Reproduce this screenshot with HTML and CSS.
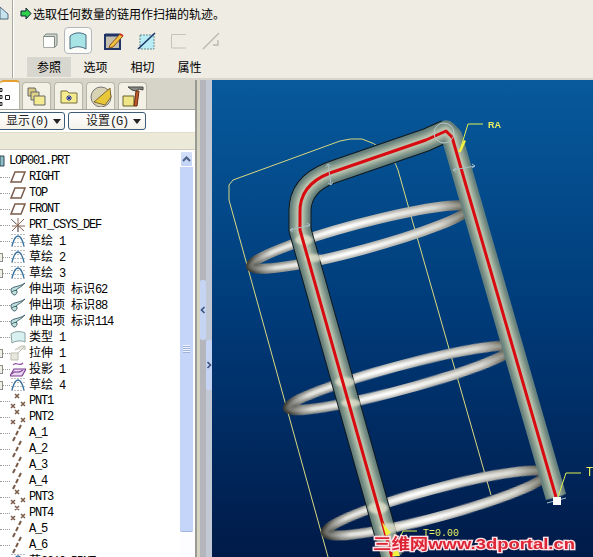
FILE: index.html
```html
<!DOCTYPE html>
<html lang="en">
<head>
    <meta charset="UTF-8">
    <title>Pro/E sweep</title>
    <link rel="stylesheet" href="styles.css">
</head>
<body>
<svg class="defs" width="0" height="0">
    <defs>
        <symbol id="i-plane" viewBox="0 0 16 16"><path d="M5 3H15L11 13H1Z" fill="#fff" stroke="#7b5b49" stroke-width="1.5"/></symbol>
        <symbol id="i-csys" viewBox="0 0 16 16"><path d="M1 2L14 14M14 2L2 14M8 1V15M2 9H15" fill="none" stroke="#8a6450" stroke-width="1"/><path d="M1 2L6 7M8 9V15" stroke="#777" stroke-width="1"/></symbol>
        <symbol id="i-sketch" viewBox="0 0 16 16"><path d="M2 13C4 5 6 3 8 3S12 5 14 13" fill="none" stroke="#2f6f9f" stroke-width="1.3"/><path d="M2 1V15M5 1V15M8 1V15M11 1V15M14 1V15" stroke="#778" stroke-width="1" stroke-dasharray="1 3"/></symbol>
        <symbol id="i-extrude" viewBox="0 0 16 16"><path d="M1 8C4 5 9 6 15 2C11 6 7 8 6 9C8 10 7 13 5 14C2 14 1 11 1 8Z" fill="#bfe0dc" stroke="#40606a" stroke-width="1"/><path d="M2 11C4 9 6 9 7 10" fill="none" stroke="#40606a" stroke-width="1"/></symbol>
        <symbol id="i-quilt" viewBox="0 0 16 16"><path d="M1 5C5 2 11 2 15 4V13C11 11 5 12 2 14Z" fill="#d8f0f0" stroke="#8aa0a0" stroke-width="1"/></symbol>
        <symbol id="i-stretch" viewBox="0 0 16 16"><path d="M1 8H8V15H1ZM8 8L14 2M5 5L11 1H15V5" fill="#e8e8e0" stroke="#bdbdb0" stroke-width="1"/></symbol>
        <symbol id="i-project" viewBox="0 0 16 16"><path d="M4 8H16L12 15H0Z" fill="#e8d8f0" stroke="#7a3a90" stroke-width="1.2"/><path d="M2 13C5 8 7 14 13 9M3 4C6 0 9 6 13 2" fill="none" stroke="#8a4aa0" stroke-width="1.1"/></symbol>
        <symbol id="i-points" viewBox="0 0 16 20"><path d="M5 3L9 7M9 3L5 7M11 11L15 15M15 11L11 15M1 13L5 17M5 13L1 17" stroke="#7b5b49" stroke-width="1.5"/></symbol>
        <symbol id="i-axis" viewBox="0 0 16 18"><path d="M11 1L9 5M8 7L6 11M5 13L3 17" stroke="#7b5b49" stroke-width="2"/></symbol>

        <linearGradient id="ringShade">
            <stop offset="0" stop-color="#3c3c36"/>
            <stop offset=".06" stop-color="#8a8a84"/>
            <stop offset=".4" stop-color="#c2c2be"/>
            <stop offset=".88" stop-color="#a8a69e"/>
            <stop offset="1" stop-color="#4a4a40"/>
        </linearGradient>
        <linearGradient id="ringLight">
            <stop offset="0" stop-color="#6c6c66"/>
            <stop offset=".1" stop-color="#e4e4e0"/>
            <stop offset=".45" stop-color="#ffffff"/>
            <stop offset=".85" stop-color="#dcdcd6"/>
            <stop offset="1" stop-color="#77776c"/>
        </linearGradient>
        <linearGradient id="sky" x2="0" y2="1">
            <stop offset="0" stop-color="#075a9c"/>
            <stop offset=".5" stop-color="#003a78"/>
            <stop offset="1" stop-color="#001a48"/>
        </linearGradient>
        <filter id="crisp"><feGaussianBlur stdDeviation=".4"/></filter>
        <filter id="soft" x="-10%" y="-10%" width="120%" height="120%"><feGaussianBlur stdDeviation="1.300"/></filter>
    </defs>
</svg>

<div class="app">
    <div class="dash">
        <div class="dash-stub">
            <svg width="9" height="20" viewBox="0 0 9 20"><path d="M0 7L8 14V19H0Z" fill="#c6e4ee" stroke="#50687a"/></svg>
        </div>
        <div class="dash-main">
            <div class="prompt">
                <svg width="12" height="13" viewBox="0 0 12 13"><path d="M1 4H6V1L11 6.5L6 12V9H1Z" fill="#2fd04a" stroke="#123" stroke-width="1"/></svg>
                <span>选取任何数量的链用作扫描的轨迹。</span>
            </div>
            <div class="tools">
                <span class="tool"><svg width="16" height="15" viewBox="0 0 16 15"><path d="M1.500 3.500H12.500V14.500H1.500Z" fill="#fff" stroke="#a4aaa4"/><path d="M1.500 3.500L4 1H15V12L12.500 14.500V3.500Z" fill="#d0d4cc" stroke="#7c8a84"/></svg></span>
                <span class="tool is-on"><svg width="18" height="18" viewBox="0 0 18 18"><path d="M1 4C6 0 12 0 17 3V17C12 14 6 14 1 17Z" fill="#a8e4e6" stroke="#4a6a80"/></svg></span>
                <span class="tool"><svg width="20" height="18" viewBox="0 0 20 18"><path d="M1 3H16V17H1Z" fill="#c4bfae" stroke="#203468" stroke-width="2"/><path d="M1 3H16" stroke="#203468" stroke-width="3"/><path d="M6 13L16 2L19 4L9 15L5 16Z" fill="#f0c040" stroke="#8a5020"/><path d="M16 2L19 4" stroke="#d03020" stroke-width="2"/></svg></span>
                <span class="tool"><svg width="19" height="18" viewBox="0 0 19 18"><path d="M3 3H17V17H3Z" fill="#b8ecf4" stroke="#6a8a90" stroke-dasharray="2 1"/><path d="M1 17L18 1" stroke="#1c3468" stroke-width="1.6"/></svg></span>
                <span class="tool"><svg width="16" height="16" viewBox="0 0 16 16"><path d="M.5 1.500H15M.5 1.500V15H15" fill="none" stroke="#c4c4bc"/></svg></span>
                <span class="tool"><svg width="18" height="18" viewBox="0 0 18 18"><path d="M1 17L17 1M11 13H16V8" fill="none" stroke="#b8b8b0" stroke-width="1.300"/></svg></span>
            </div>
            <div class="dash-tabs">
                <span class="dash-tab is-on">参照</span>
                <span class="dash-tab">选项</span>
                <span class="dash-tab">相切</span>
                <span class="dash-tab">属性</span>
            </div>
        </div>
    </div>

    <div class="work">
        <div class="nav">
            <div class="nav-tabs">
                <div class="nav-tab first">
                    <svg width="10" height="24" viewBox="0 0 10 24"><path d="M0 4.500H2V7.500H0ZM0 11.500H2V14.500H0ZM5.500 11.500H9.500V15.500H5.500ZM0 18.500H2V21.500H0Z" fill="#fff" stroke="#222"/></svg>
                </div>
                <div class="nav-tab">
                    <svg width="20" height="20" viewBox="0 0 20 20"><path d="M1 2H8L9 4V10H1Z" fill="#d8c880" stroke="#666"/><path d="M4 6H12V14H4Z" fill="#e0d488" stroke="#666"/><path d="M7 10H18V19H7Z" fill="#f4ea90" stroke="#666"/></svg>
                </div>
                <div class="nav-tab">
                    <svg width="18" height="16" viewBox="0 0 18 16"><path d="M1 3H7L9 5H17V15H1Z" fill="#f4ec8c" stroke="#7a7040"/><path d="M9 7V13M6 10H12M7 8L11 12M11 8L7 12" stroke="#2030a0"/></svg>
                </div>
                <div class="nav-tab">
                    <svg width="22" height="22" viewBox="0 0 22 22"><circle cx="11" cy="12" r="10" fill="#d8d2b4" stroke="#777"/><path d="M4 17L20 3L21 12L15 20Z" fill="#e8c838" stroke="#6a5020" stroke-width=".8"/></svg>
                </div>
                <div class="nav-tab">
                    <svg width="22" height="22" viewBox="0 0 22 22"><path d="M1 11H12V21H1Z" fill="#f0e488" stroke="#6a6030"/><path d="M6 2H21V5L17 4L14 6L10 5Z" fill="#8a8a84" stroke="#444"/><path d="M14 6H17L15 21H12Z" fill="#c0582c" stroke="#6a3010"/></svg>
                </div>
            </div>
            <div class="nav-pane">
                <div class="nav-btns">
                    <button class="menu-btn show"><span class="lbl"><span class="cjk">显示</span>(0)</span><i class="caret"></i></button>
                    <button class="menu-btn conf"><span class="lbl"><span class="cjk">设置</span>(G)</span><i class="caret"></i></button>
                </div>
                <div class="nav-head"></div>
                <div class="nav-body">
                    <div class="tree">
                        <div class="row root"><svg class="root-ico" width="5" height="16" viewBox="0 0 5 16"><path d="M0 3H4V13H0Z" fill="#8cc0c8" stroke="#345"/></svg><span class="lbl">LOP001.PRT</span></div>
                        <div class="row"><i class="elbow"></i><svg class="ico" width="16" height="16"><use href="#i-plane"/></svg><span class="lbl">RIGHT</span></div>
                        <div class="row"><i class="elbow"></i><svg class="ico" width="16" height="16"><use href="#i-plane"/></svg><span class="lbl">TOP</span></div>
                        <div class="row"><i class="elbow"></i><svg class="ico" width="16" height="16"><use href="#i-plane"/></svg><span class="lbl">FRONT</span></div>
                        <div class="row"><i class="elbow"></i><svg class="ico" width="16" height="16"><use href="#i-csys"/></svg><span class="lbl">PRT_CSYS_DEF</span></div>
                        <div class="row"><i class="elbow"></i><svg class="ico" width="16" height="16"><use href="#i-sketch"/></svg><span class="lbl"><span class="cjk">草绘</span> 1</span></div>
                        <div class="row"><i class="elbow plus"></i><svg class="ico" width="16" height="16"><use href="#i-sketch"/></svg><span class="lbl"><span class="cjk">草绘</span> 2</span></div>
                        <div class="row"><i class="elbow plus"></i><svg class="ico" width="16" height="16"><use href="#i-sketch"/></svg><span class="lbl"><span class="cjk">草绘</span> 3</span></div>
                        <div class="row"><i class="elbow"></i><svg class="ico" width="16" height="16"><use href="#i-extrude"/></svg><span class="lbl"><span class="cjk">伸出项</span> <span class="cjk">标识</span>62</span></div>
                        <div class="row"><i class="elbow"></i><svg class="ico" width="16" height="16"><use href="#i-extrude"/></svg><span class="lbl"><span class="cjk">伸出项</span> <span class="cjk">标识</span>88</span></div>
                        <div class="row"><i class="elbow"></i><svg class="ico" width="16" height="16"><use href="#i-extrude"/></svg><span class="lbl"><span class="cjk">伸出项</span> <span class="cjk">标识</span>114</span></div>
                        <div class="row"><i class="elbow"></i><svg class="ico" width="16" height="16"><use href="#i-quilt"/></svg><span class="lbl"><span class="cjk">类型</span> 1</span></div>
                        <div class="row"><i class="elbow plus"></i><svg class="ico" width="16" height="16"><use href="#i-stretch"/></svg><span class="lbl"><span class="cjk">拉伸</span> 1</span></div>
                        <div class="row"><i class="elbow plus"></i><svg class="ico" width="16" height="16"><use href="#i-project"/></svg><span class="lbl"><span class="cjk">投影</span> 1</span></div>
                        <div class="row"><i class="elbow plus"></i><svg class="ico" width="16" height="16"><use href="#i-sketch"/></svg><span class="lbl"><span class="cjk">草绘</span> 4</span></div>
                        <div class="row"><i class="elbow"></i><svg class="ico" width="16" height="20"><use href="#i-points"/></svg><span class="lbl">PNT1</span></div>
                        <div class="row"><i class="elbow"></i><svg class="ico" width="16" height="20"><use href="#i-points"/></svg><span class="lbl">PNT2</span></div>
                        <div class="row"><i class="elbow"></i><svg class="ico" width="16" height="18"><use href="#i-axis"/></svg><span class="lbl">A_1</span></div>
                        <div class="row"><i class="elbow"></i><svg class="ico" width="16" height="18"><use href="#i-axis"/></svg><span class="lbl">A_2</span></div>
                        <div class="row"><i class="elbow"></i><svg class="ico" width="16" height="18"><use href="#i-axis"/></svg><span class="lbl">A_3</span></div>
                        <div class="row"><i class="elbow"></i><svg class="ico" width="16" height="18"><use href="#i-axis"/></svg><span class="lbl">A_4</span></div>
                        <div class="row"><i class="elbow"></i><svg class="ico" width="16" height="20"><use href="#i-points"/></svg><span class="lbl">PNT3</span></div>
                        <div class="row"><i class="elbow"></i><svg class="ico" width="16" height="20"><use href="#i-points"/></svg><span class="lbl">PNT4</span></div>
                        <div class="row"><i class="elbow"></i><svg class="ico" width="16" height="18"><use href="#i-axis"/></svg><span class="lbl">A_5</span></div>
                        <div class="row"><i class="elbow"></i><svg class="ico" width="16" height="18"><use href="#i-axis"/></svg><span class="lbl">A_6</span></div>
                        <div class="row"><i class="elbow"></i><svg class="ico" width="16" height="16"><use href="#i-sketch"/></svg><span class="lbl"><span class="cjk">草</span>3010 PRNT</span></div>
                    </div>
                    <div class="scroll">
                        <div class="scroll-up">
                            <svg width="9" height="6" viewBox="0 0 9 6"><path d="M1 5L4.500 1.500L8 5" fill="none" stroke="#4d6185" stroke-width="2"/></svg>
                        </div>
                        <div class="scroll-thumb"><i class="grip"></i></div>
                    </div>
                </div>
            </div>
        </div>

        <div class="sash">
            <div class="sash-edge"></div>
            <div class="sash-col">
                <div class="sash-bar"></div>
                <div class="sash-pill">
                    <svg width="6" height="8" viewBox="0 0 6 8"><path d="M4.500 1L1.500 4L4.500 7" fill="none" stroke="#39507c" stroke-width="1.600"/></svg>
                </div>
                <div class="sash-bar"></div>
            </div>
            <div class="sash-col alt">
                <div class="sash-bar top"></div>
                <div class="sash-pill">
                    <svg width="6" height="8" viewBox="0 0 6 8"><path d="M1.500 1L4.500 4L1.500 7" fill="none" stroke="#39507c" stroke-width="1.600"/></svg>
                </div>
                <div class="sash-bar"></div>
            </div>
        </div>

        <svg class="view" width="381" height="477" viewBox="212 80 381 477">
            <rect x="212" y="80" width="381" height="477" fill="url(#sky)"/>

            <path class="outline" d="M229 200V185L233 180L340 141Q350 138 362 139Q374 142 384 151Q394 158 398 170L413 223L491 495"/>
            <path class="outline" d="M229 200L328 557"/>

            <g fill="none" filter="url(#crisp)">
                <ellipse cx="360" cy="237" rx="113" ry="13" transform="rotate(-15 360 237)" stroke="url(#ringShade)" stroke-width="10"/>
                <ellipse cx="400" cy="378" rx="116" ry="12" transform="rotate(-15 400 378)" stroke="url(#ringShade)" stroke-width="10"/>
                <ellipse cx="436" cy="503" rx="114" ry="14" transform="rotate(-15 436 503)" stroke="url(#ringShade)" stroke-width="10"/>
            </g>
            <g fill="none" filter="url(#soft)">
                <ellipse cx="360" cy="237" rx="113" ry="13" transform="rotate(-15 360 237)" stroke="url(#ringLight)" stroke-width="5"/>
                <ellipse cx="400" cy="378" rx="116" ry="12" transform="rotate(-15 400 378)" stroke="url(#ringLight)" stroke-width="5"/>
                <ellipse cx="436" cy="503" rx="114" ry="14" transform="rotate(-15 436 503)" stroke="url(#ringLight)" stroke-width="5"/>
            </g>

            <path class="tube-edge" d="M392 557L300 230V213Q299 185 330 173L426 140L446 131"/>
            <path class="t1" d="M392 557L300 230V213Q299 185 330 173L426 140L446 131L452 137L556 497"/>
            <g class="tube" filter="url(#soft)">
                <path class="t2" d="M392 557L300 230V213Q299 185 330 173L426 140L446 131L452 137L556 497"/>
                <path class="t3" d="M392 557L300 230V213Q299 185 330 173L426 140L446 131L452 137L556 497"/>
            </g>

            <g class="patches" filter="url(#soft)">
                <ellipse cx="304" cy="240" rx="9" ry="5"/>
                <ellipse cx="314" cy="258" rx="9" ry="4"/>
                <ellipse cx="345" cy="382" rx="10" ry="5"/>
                <ellipse cx="351" cy="403" rx="10" ry="4"/>
                <ellipse cx="378" cy="508" rx="10" ry="6"/>
                <ellipse cx="390" cy="528" rx="10" ry="5"/>
            </g>

            <path class="red" d="M392 557L300 230V213Q299 185 330 173L426 140L446 131L452 137L556 497"/>

            <g class="grips">
                <path d="M453 170L475 166M453 170L456 168M453 170L456 172M475 166L472 164M475 166L472 168"/>
                <path d="M328 164L331 185M328 164L326 167M328 164L331 166M331 185L328 183M331 185L333 182"/>
                <path d="M290 230L310 225M290 230L293 228M290 230L293 232M310 225L307 223M310 225L307 227"/>
            </g>
            <circle class="vertex" cx="444" cy="133" r="10"/>

            <path class="lead" d="M483 124H468L461 147"/>
            <path class="tip" d="M464 140L458 152L461 152L466 141Z"/>
            <text class="tag" x="488" y="128">RA</text>

            <path class="lead" d="M581 473H566L558 497"/>
            <text class="tag thin" x="586" y="476">T</text>
            <path class="grips" d="M547 503L566 498"/>
            <rect x="553" y="497" width="8" height="8" fill="#fff"/>

            <path class="lead" d="M417 531H403L397 545"/>
            <path class="tip" d="M382 522L386 536L391 533Z"/>
            <path class="tip" d="M392 556L396 545L400 556Z"/>
            <text class="tag thin small" x="423" y="536">T=0.00</text>

            <text class="mark" x="373" y="549" textLength="202" lengthAdjust="spacingAndGlyphs">三维网www.3dportal.cn</text>
        </svg>
    </div>
</div>
</body>
</html>
```

FILE: styles.css
```css
body {
    margin: 0;
    width: 593px;
    height: 557px;
    overflow: hidden;
    background: #ece9dc;
    font-family: "Liberation Mono", "Noto Sans CJK SC", monospace;
    color: #000;
}

.defs {
    position: absolute;
}

.app {
    display: flex;
    flex-direction: column;
    height: 557px;
}

.cjk {
    font-family: "Noto Sans CJK SC", sans-serif;
    font-size: 12px;
    line-height: 1;
    letter-spacing: 0;
}

.lbl {
    white-space: pre;
    line-height: 14px;
}

/* top dashboard */
.dash {
    display: flex;
    height: 80px;
    flex: none;
    box-sizing: border-box;
    background: #eeece3;
    border-bottom: 2px solid #d8d6ca;
}

.dash-stub {
    width: 13px;
    box-sizing: border-box;
    border-right: 1px solid #a8a89e;
    box-shadow: 1px 0 0 #fff;
}

.dash-stub svg {
    display: block;
}

.dash-main {
    flex: 1;
    padding-left: 7px;
}

.prompt {
    display: flex;
    align-items: center;
    gap: 1px;
    height: 27px;
    box-sizing: border-box;
    font-family: "Noto Sans CJK SC", sans-serif;
    font-size: 12px;
}

.tools {
    display: flex;
    height: 27px;
    align-items: center;
    margin-left: 22px;
}

.tool {
    height: 27px;
    display: flex;
    align-items: center;
    justify-content: center;
    box-sizing: border-box;
}

.tool:nth-child(1) {
    width: 16px;
    margin-right: 6px;
}

.tool:nth-child(2) {
    width: 28px;
    margin-right: 12px;
}

.tool:nth-child(3) {
    width: 20px;
    margin-right: 12px;
}

.tool:nth-child(4) {
    width: 20px;
    margin-right: 15px;
}

.tool:nth-child(5) {
    width: 16px;
    margin-right: 15px;
}

.tool:nth-child(6) {
    width: 18px;
}

.tool.is-on {
    background: #fbfbf8;
    border: 1px solid #b4b8bc;
    border-radius: 4px;
}

.dash-tabs {
    display: flex;
    font-family: "Noto Sans CJK SC", sans-serif;
    font-size: 12px;
    line-height: 20px;
    margin: 3px 0 0 7px;
}

.dash-tab {
    width: 47px;
    height: 20px;
    text-align: center;
}

.dash-tab.is-on {
    width: 44px;
    margin-right: 1px;
    background: #d8d7cf;
}

/* model tree side */
.work {
    display: flex;
    flex: 1;
    min-height: 0;
}

.nav {
    width: 195px;
    flex: none;
    display: flex;
    flex-direction: column;
    background: #d6d4c8;
    border-right: 2px solid #9a9a94;
}

.nav-tabs {
    display: flex;
    height: 29px;
    flex: none;
    gap: 2px;
    align-items: flex-end;
}

.nav-tab {
    width: 29px;
    height: 27px;
    margin-right: 1px;
    box-sizing: border-box;
    display: flex;
    align-items: center;
    justify-content: center;
    background: #f3f1e6;
    border: 1px solid #b8b6a8;
    border-bottom: none;
    border-radius: 4px 4px 0 0;
}

.nav-tab.first {
    width: 20px;
    height: 29px;
    margin-right: 0;
    justify-content: flex-start;
    background: #fff;
    border: none;
    border-top: 2px solid #e6a030;
    border-right: 1px solid #b8b6a8;
}

.nav-pane {
    flex: 1;
    min-height: 0;
    display: flex;
    flex-direction: column;
    background: #fff;
    border-top: 1px solid #a4a49a;
}

.nav-btns {
    display: flex;
    gap: 3px;
    height: 22px;
    align-items: center;
    flex: none;
}

.menu-btn {
    display: flex;
    align-items: center;
    height: 18px;
    padding: 0;
    font-family: inherit;
    font-size: 12px;
    letter-spacing: -1.2px;
    color: #222;
    background: linear-gradient(#fff, #f4f2ea);
    border: 1px solid #3c5c78;
    border-radius: 3px;
}

.menu-btn.show {
    width: 71px;
    margin-left: -6px;
    padding-left: 11px;
}

.menu-btn.conf {
    width: 78px;
    padding-left: 17px;
}

.caret {
    border: 4px solid transparent;
    border-top: 5px solid #222;
    border-bottom: none;
    margin-left: 5px;
}

.nav-head {
    height: 18px;
    flex: none;
    width: 195px;
    box-sizing: border-box;
    background: #ece9d8;
    border-top: 1px solid #e0ddcc;
    border-bottom: 1px solid #d0cec0;
}

.nav-body {
    flex: 1;
    min-height: 0;
    display: flex;
    overflow: hidden;
    padding-top: 1px;
}

.tree {
    width: 180px;
    flex: none;
    overflow: hidden;
    padding-top: 2px;
}

.row {
    display: flex;
    align-items: center;
    height: 16px;
    font-size: 12px;
    letter-spacing: -1.2px;
}

.root-ico {
    margin-right: 4px;
}

.elbow {
    width: 10px;
    flex: none;
    position: relative;
    border-top: 1px dotted #999;
}

.elbow.plus::before {
    content: "";
    position: absolute;
    left: -6px;
    top: -5px;
    width: 7px;
    height: 7px;
    background: #f0f0e8;
    border: 1px solid #8c8c84;
}

.ico {
    flex: none;
    margin-right: 3px;
    overflow: visible;
}

.scroll {
    width: 15px;
    flex: none;
    display: flex;
    flex-direction: column;
    background: #fdfdff;
}

.scroll-up {
    height: 16px;
    flex: none;
    width: 13px;
    display: flex;
    align-items: center;
    justify-content: center;
    background: linear-gradient(#d4e0fa, #c0d2f6);
    border: 1px solid #fff;
    border-radius: 2px;
    box-sizing: border-box;
}

.scroll-thumb {
    width: 13px;
    height: 365px;
    flex: none;
    position: relative;
    box-sizing: border-box;
    background: #c5d5fa;
    border-bottom: 1px solid #9fb4dc;
    border-radius: 0 0 2px 2px;
}

.grip {
    position: absolute;
    left: 3px;
    top: 178px;
    width: 7px;
    height: 8px;
    background: repeating-linear-gradient(#eef3ff 0 1px, #9fb4dc 1px 2px);
}

/* sash */
.sash {
    width: 15px;
    flex: none;
    display: flex;
    background: #d8d6c8;
}

.sash-edge {
    width: 3px;
    background: #d6d4c2;
}

.sash-col {
    width: 6px;
    display: flex;
    flex-direction: column;
    background: #b4b6bc;
}

.sash-col.alt {
    background: #c2c8d4;
}

.sash-bar {
    flex: 1;
}

.sash-bar.top {
    flex: none;
    height: 260px;
}

.sash-pill {
    height: 60px;
    flex: none;
    display: flex;
    align-items: center;
    background: #c6d4f4;
    border-radius: 2px;
    margin-bottom: 137px;
}

.sash-col:not(.alt) .sash-bar:first-child {
    flex: none;
    height: 200px;
}

.sash-col.alt .sash-pill {
    margin-bottom: 0;
    height: 50px;
}

/* 3d view */
.view {
    flex: none;
    display: block;
}

.outline {
    fill: none;
    stroke: #d8d880;
    stroke-width: 1;
}

.tube-edge {
    fill: none;
    stroke: #10181c;
    stroke-width: 23;
    stroke-linejoin: round;
}

.t1 {
    fill: none;
    stroke: #66807c;
    stroke-width: 21;
    stroke-linejoin: round;
}

.tube path {
    fill: none;
    stroke-linejoin: round;
}

.t2 {
    stroke: #8fa192;
    stroke-width: 15;
}

.t3 {
    stroke: #b8c4b0;
    stroke-width: 8;
}

.patches ellipse {
    fill: #e4e2cc;
    opacity: .8;
}

.red {
    fill: none;
    stroke: #d80c10;
    stroke-width: 3;
    stroke-linejoin: round;
}

.grips path,
path.grips {
    fill: none;
    stroke: #a8c0c8;
    stroke-width: 1;
}

.vertex {
    fill: none;
    stroke: #b8c8c8;
    stroke-width: 1;
}

.lead {
    fill: none;
    stroke: #e0f050;
    stroke-width: 1;
}

.tip {
    fill: #f0f040;
}

.tag {
    font-family: "Liberation Sans", sans-serif;
    font-size: 9px;
    font-weight: bold;
    fill: #e8f060;
}

.tag.thin {
    font-family: "Liberation Mono", monospace;
    font-size: 12px;
    font-weight: normal;
}

.tag.thin.small {
    font-size: 10px;
}

.mark {
    font-family: "Liberation Sans", "Noto Sans CJK SC", sans-serif;
    font-size: 15px;
    font-weight: bold;
    fill: #dc2434;
    stroke: #ffe0e4;
    stroke-width: 2.6;
    paint-order: stroke;
}
```
